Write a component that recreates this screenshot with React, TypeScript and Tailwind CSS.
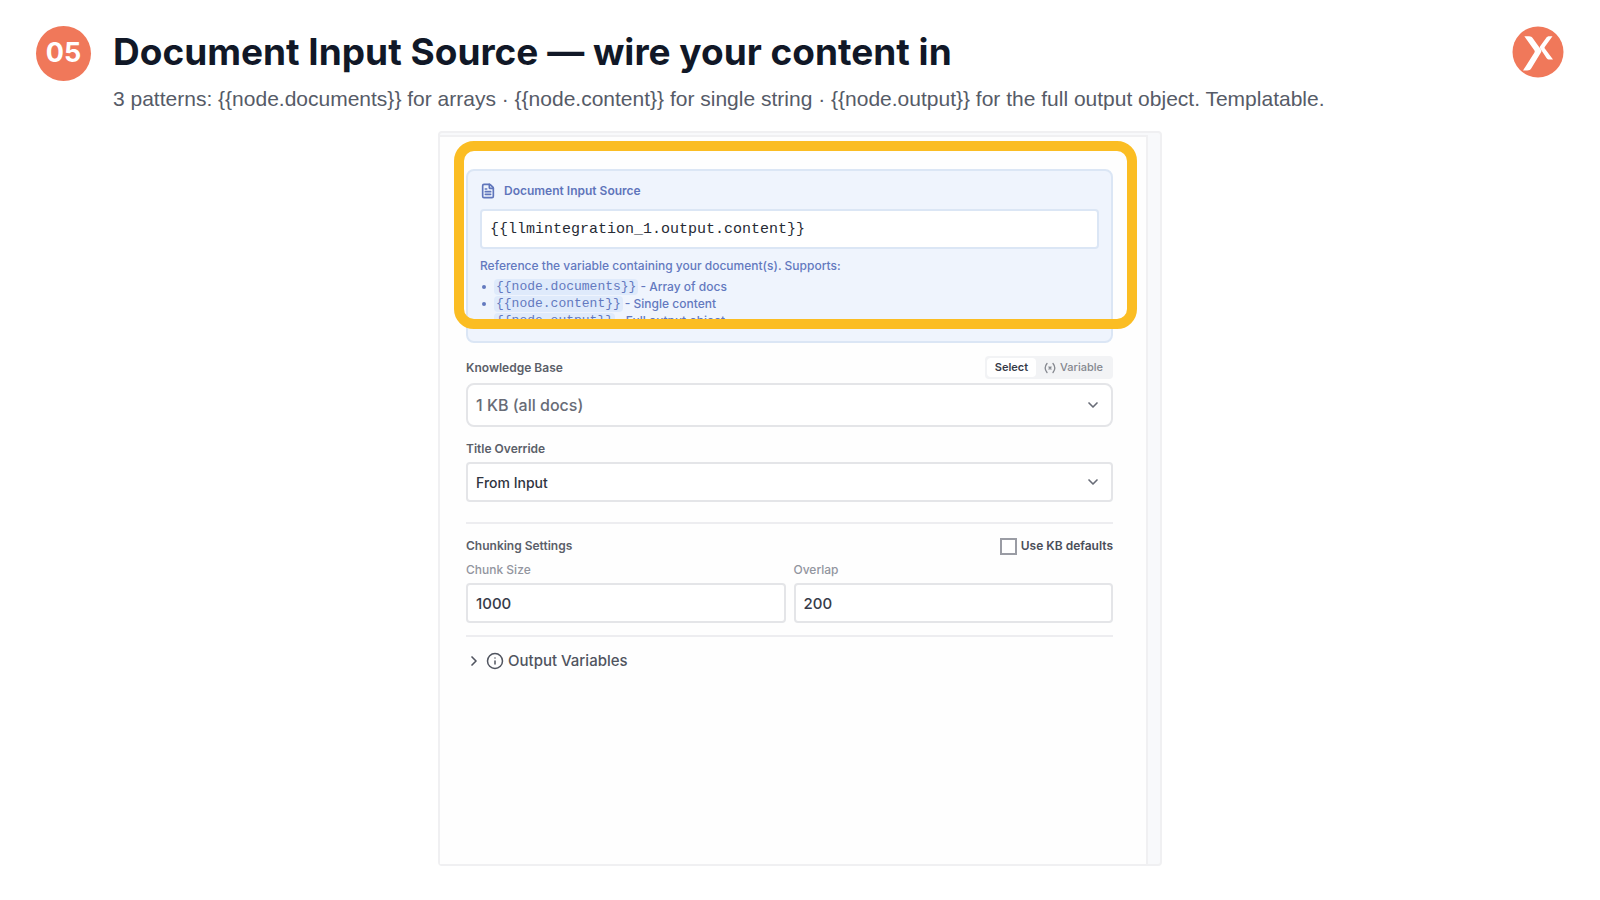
import { useState } from 'react';
import type { ReactNode } from 'react';
import { ChevronDown, ChevronRight, FileText, Info } from 'lucide-react';

function BrandMark() {
  return (
    <svg viewBox="0 0 52 52" className="size-[52px] shrink-0" role="img" aria-label="Brand logo">
      <circle cx="26" cy="26" r="25.5" fill="#f0785a" />
      <path
        d="M12.300 10.200h4.800c1.800 0 2.700.7 3.500 1.900l8.100 11.100c.9 1.200.9 2.200.2 3.400L19.500 42c-1.100 1.800-2.400 2.500-4.300 2.500h-4.200l11.300-17.800c.6-.9.6-1.500 0-2.400z"
        fill="#fff"
      />
      <path
        d="M40.500 10.200h-3.200c-1.500 0-2.200.5-3 1.500l-6 8.200c-.7.900-.7 1.700-.1 2.600l6.300 9.400c.8 1.200 1.700 1.700 3.100 1.700h3.400l-8-10.800c-.6-.8-.6-1.300-.1-2.100z"
        fill="#fff"
      />
    </svg>
  );
}

function VariableIcon() {
  return (
    <svg viewBox="0 0 12 12" className="size-3" fill="none" stroke="currentColor" strokeWidth="1.3" strokeLinecap="round" aria-hidden="true">
      <path d="M3 1.500C.800 4.200.800 7.800 3 10.500M9 1.500c2.200 2.700 2.200 6.300 0 9" />
      <path d="M5 5l2 2M7 5L5 7" />
    </svg>
  );
}

const patterns = [
  { code: '{{node.documents}}', note: 'Array of docs' },
  { code: '{{node.content}}', note: 'Single content' },
  { code: '{{node.output}}', note: 'Full output object' },
];

function DocumentSource() {
  const [value, setValue] = useState('{{llmintegration_1.output.content}}');
  return (
    <section className="rounded-lg border-2 border-[#dbe6f5] bg-[#eff4fd] px-3 pt-2.5 pb-3 text-[#6379bf]">
      <label htmlFor="source" className="flex h-5 items-center gap-2 text-[12px] font-semibold text-[#5f75bb]">
        <FileText className="size-4" strokeWidth={2.5} />
        Document Input Source
      </label>
      <input
        id="source"
        value={value}
        onChange={(e) => setValue(e.target.value)}
        className="mt-2 h-10 w-full rounded border-2 border-[#dbe6f5] bg-white px-2 font-['Liberation_Mono',monospace] text-[15px] text-[#272b35]"
      />
      <p className="mt-[7px] text-[12px] leading-5 font-medium">Reference the variable containing your document(s). Supports:</p>
      <ul className="mt-0.5 text-[12px] leading-[17px] font-medium">
        {patterns.map((p) => (
          <li key={p.code} className="flex items-center">
            <span className="ml-0.5 mr-2 size-1 rounded-full bg-current" />
            <code className="mr-0.5 h-4 rounded bg-[#dfeafb] px-0.5 font-['Liberation_Mono',monospace] text-[13px] leading-4 font-normal">{p.code}</code>
            <span>- {p.note}</span>
          </li>
        ))}
      </ul>
    </section>
  );
}

function SelectBox({ id, option, className }: { id: string; option: string; className: string }) {
  return (
    <div className="relative">
      <select id={id} className={'w-full appearance-none border-2 border-[#e4e5e8] bg-white px-2 font-medium ' + className}>
        <option>{option}</option>
      </select>
      <ChevronDown strokeWidth={2.5} className="pointer-events-none absolute top-1/2 right-3 size-4 -translate-y-1/2 text-[#686c77]" />
    </div>
  );
}

function NumberField({ id, label, value }: { id: string; label: string; value: string }) {
  return (
    <div className="flex-1">
      <label htmlFor={id} className="block text-[12px] leading-5 font-medium text-[#92959e]">
        {label}
      </label>
      <input
        id={id}
        defaultValue={value}
        inputMode="numeric"
        className="mt-[3px] h-10 w-full rounded border-2 border-[#e4e5e8] bg-white px-2 text-[15px] font-medium text-[#363b49]"
      />
    </div>
  );
}

function Highlight({ children }: { children: ReactNode }) {
  return (
    <div className="relative">
      {children}
      <div className="pointer-events-none absolute -top-7 -right-6 bottom-3.5 -left-3 rounded-[20px] border-10 border-[#fbbd23]" />
    </div>
  );
}

export default function App() {
  return (
    <div className="min-h-screen bg-white px-9 pt-[26px] pb-9 font-['Inter',sans-serif]">
      <header className="flex items-start">
        <div className="flex size-[55px] shrink-0 items-center justify-center rounded-full bg-[#f0785a] text-[27px] font-bold text-white">05</div>
        <div className="ml-[22px] flex-1">
          <h1 className="text-[37px] leading-[52px] font-bold text-[#111827]">Document Input Source — wire your content in</h1>
          <p className="mt-2 font-['Liberation_Sans',sans-serif] text-[21px] leading-[26px] text-[#565b67]">
            3 patterns: {'{{node.documents}}'} for arrays · {'{{node.content}}'} for single string · {'{{node.output}}'} for the full output object. Templatable.
          </p>
        </div>
        <BrandMark />
      </header>

      <main className="mx-auto mt-[19px] w-full max-w-[724px] rounded border-2 border-[#f0f0f2] bg-[#f8f9fb] pt-0.5 pr-3">
        <div className="min-h-[729px] border-t-2 border-r-2 border-[#f0f0f2] bg-[#fefefe] pt-8 pr-[33px] pl-[26px]">
          <Highlight>
            <DocumentSource />
          </Highlight>

          <div className="mt-[13px] flex items-center justify-between">
            <label htmlFor="kb" className="text-[12px] font-semibold text-[#5b5f69]">
              Knowledge Base
            </label>
            <div className="flex h-[23px] items-center rounded bg-[#f2f3f5] p-0.5 text-[11px] font-medium">
              <button type="button" className="h-full rounded bg-white px-2 font-semibold text-[#363b49]">
                Select
              </button>
              <button type="button" className="flex h-full items-center gap-1 px-2 text-[#85888f]">
                <VariableIcon />
                Variable
              </button>
            </div>
          </div>
          <div className="mt-1">
            <SelectBox id="kb" option="1 KB (all docs)" className="h-11 rounded-lg text-[16px] text-[#686c77]" />
          </div>

          <label htmlFor="title" className="mt-3 block text-[12px] leading-5 font-semibold text-[#5b5f69]">
            Title Override
          </label>
          <div className="mt-[3px]">
            <SelectBox id="title" option="From Input" className="h-10 rounded text-[14px] text-[#2f3440]" />
          </div>

          <hr className="mt-5 border-t-2 border-[#ededf0]" />

          <div className="mt-3 flex h-5 items-center justify-between text-[12px] font-semibold text-[#5b5f69]">
            <h2>Chunking Settings</h2>
            <label className="flex items-center gap-1 text-[#4a4e59]">
              <input type="checkbox" className="size-[17px] appearance-none border-2 border-[#9a9ca4] bg-white" />
              Use KB defaults
            </label>
          </div>
          <div className="mt-1 flex gap-2">
            <NumberField id="size" label="Chunk Size" value="1000" />
            <NumberField id="overlap" label="Overlap" value="200" />
          </div>

          <hr className="mt-3 border-t-2 border-[#ededf0]" />

          <button type="button" className="mt-3 flex h-6 items-center text-[15px] font-medium text-[#50545f]">
            <ChevronRight className="size-4" strokeWidth={2.5} />
            <Info className="mr-1 ml-1 size-[18px]" />
            Output Variables
          </button>
        </div>
      </main>
    </div>
  );
}
